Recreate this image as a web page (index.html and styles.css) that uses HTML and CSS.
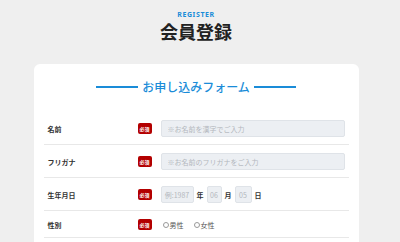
FILE: index.html
```html
<!DOCTYPE html>
<html lang="ja">
<head>
  <meta charset="UTF-8">
  <title>会員登録</title>
  <link rel="stylesheet" href="styles.css">
</head>
<body>
  <div class="page">
    <div class="page-head">
      <div class="sub-title">REGISTER</div>
      <h1 class="title">会員登録</h1>
    </div>

    <div class="card">
      <h2 class="form-title"><span>お申し込みフォーム</span></h2>

      <div class="row">
        <div class="label">名前</div>
        <div class="badge">必須</div>
        <div class="field">
          <input class="text-input" type="text" placeholder="※お名前を漢字でご入力">
        </div>
      </div>

      <div class="row">
        <div class="label">フリガナ</div>
        <div class="badge">必須</div>
        <div class="field">
          <input class="text-input" type="text" placeholder="※お名前のフリガナをご入力">
        </div>
      </div>

      <div class="row">
        <div class="label">生年月日</div>
        <div class="badge">必須</div>
        <div class="field date-field">
          <input class="text-input year" type="text" placeholder="例:1987">
          <span class="unit">年</span>
          <input class="text-input month" type="text" placeholder="06">
          <span class="unit">月</span>
          <input class="text-input day" type="text" placeholder="05">
          <span class="unit">日</span>
        </div>
      </div>

      <div class="row">
        <div class="label">性別</div>
        <div class="badge">必須</div>
        <div class="field radio-field">
          <label class="radio"><input type="radio" name="gender">男性</label>
          <label class="radio"><input type="radio" name="gender">女性</label>
        </div>
      </div>
    </div>
  </div>
</body>
</html>
```

FILE: styles.css
```css
body {
  margin: 0;
  padding: 0;
  background: #efefef;
  color: #222;
  font-family: "Noto Sans CJK JP", "Noto Sans", sans-serif;
}
.page {
  width: 392px;
  padding-top: 11px;
}
.page-head {
  text-align: center;
}
.sub-title {
  font-family: "Noto Sans", sans-serif;
  font-size: 7px;
  line-height: 8px;
  font-weight: bold;
  letter-spacing: 0.6px;
  color: #1a8cd8;
}
.title {
  margin: 2px 0 0;
  font-size: 18px;
  line-height: 20px;
  font-weight: bold;
  color: #222;
}
.card {
  width: 305px;
  margin: 23px auto 0;
  padding: 0 10px 20px;
  background: #fff;
  border-radius: 6px;
  min-height: 200px;
}
.form-title {
  display: flex;
  justify-content: center;
  align-items: center;
  gap: 4px;
  margin: 0;
  padding: 16px 0 18px;
  font-size: 12px;
  line-height: 14px;
  font-weight: 500;
  color: #1a8cd8;
}
.form-title::before,
.form-title::after {
  content: "";
  width: 42px;
  height: 2px;
  background: #1a8cd8;
}
.row {
  display: flex;
  align-items: center;
  padding: 8px 4px 7px 4px;
  border-bottom: 1px solid #e8e8e8;
}
.label {
  width: 90px;
  font-size: 7px;
  font-weight: bold;
  color: #333;
}
.badge {
  width: 14px;
  height: 11px;
  margin-right: 9px;
  background: #b30000;
  border-radius: 2px;
  color: #fff;
  font-size: 5px;
  font-weight: bold;
  line-height: 11px;
  text-align: center;
}
.field {
  flex: 1;
  display: flex;
  align-items: center;
}
.text-input {
  box-sizing: border-box;
  width: 184px;
  height: 17px;
  padding: 0 6px;
  margin: 0;
  background: #eceff3;
  border: 1px solid #dfe3e8;
  border-radius: 2px;
  font-family: inherit;
  font-size: 7px;
  outline: none;
}
.text-input::placeholder {
  color: #b3b7bd;
}
.date-field {
  gap: 3px;
}
.date-field .text-input {
  padding: 0;
  text-align: center;
}
.year {
  width: 33px;
}
.month {
  width: 15px;
}
.day {
  width: 17px;
}
.unit {
  font-size: 7px;
  font-weight: bold;
  color: #333;
}
.radio-field {
  gap: 10px;
  height: 9px;
  padding-left: 2px;
}
.radio {
  display: flex;
  align-items: center;
  gap: 1px;
  font-size: 7px;
  color: #555;
}
.radio input {
  appearance: none;
  margin: 0;
  width: 6px;
  height: 6px;
  border: 1px solid #999;
  border-radius: 50%;
  box-sizing: border-box;
  background: #fff;
}
```
